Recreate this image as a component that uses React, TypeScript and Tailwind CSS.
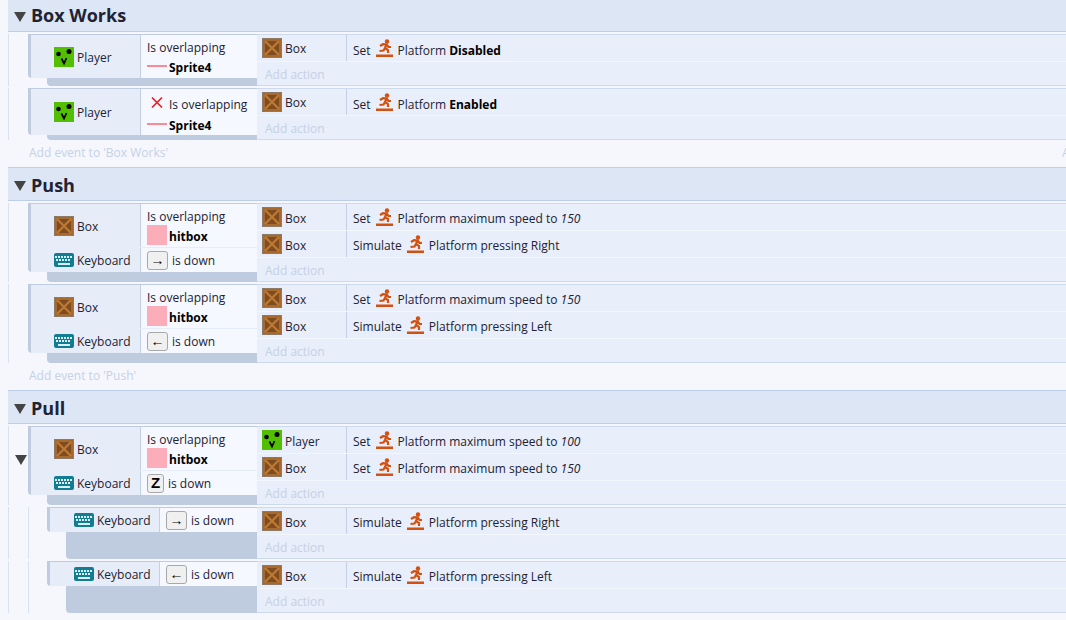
import { FC, ReactNode } from "react";

const PlayerIcon: FC = () => (
  <svg width="20" height="20" viewBox="0 0 20 20" className="shrink-0">
    <rect width="20" height="20" fill="#52bf02" />
    <circle cx="4.5" cy="7" r="2.3" fill="#000" />
    <circle cx="15" cy="4.5" r="2.5" fill="#000" />
    <path d="M7.5 11.5 L10 16.5 L12.5 11" stroke="#000" strokeWidth="1.8" fill="none" />
  </svg>
);

const BoxIcon: FC = () => (
  <svg width="20" height="20" viewBox="0 0 20 20" className="shrink-0">
    <rect width="20" height="20" fill="#a8692f" />
    <rect x="0.5" y="0.5" width="19" height="19" fill="none" stroke="#8c7a66" />
    <rect x="3" y="3" width="14" height="14" fill="#7f4c22" />
    <path d="M3 3 L17 17 M17 3 L3 17" stroke="#bd7831" strokeWidth="2.4" />
  </svg>
);

const KeyboardIcon: FC = () => (
  <svg width="20" height="14" viewBox="0 0 20 14" className="shrink-0">
    <rect width="20" height="14" rx="2" fill="#127c92" />
    {[2, 5, 8, 11, 14, 17].map((x) => (
      <rect key={x} x={x - 1} y="3" width="2" height="2" fill="#d8f0f4" />
    ))}
    {[3, 6, 9, 12, 15].map((x) => (
      <rect key={x} x={x - 1} y="6" width="2" height="2" fill="#d8f0f4" />
    ))}
    <rect x="4" y="10" width="12" height="2" fill="#d8f0f4" />
  </svg>
);

const PlatformIcon: FC = () => (
  <svg width="18" height="18" viewBox="0 0 18 18" className="shrink-0">
    <circle cx="11" cy="2.5" r="2.2" fill="#d4500f" />
    <path
      d="M4 7 L7 5.2 L10.5 5.5 L9 9 L12 11 L12 14 M9 9 L7.5 11.5 L3.5 12 M10.5 5.5 L12.5 8 L15 8"
      stroke="#d4500f"
      strokeWidth="2.2"
      fill="none"
    />
    <rect x="0" y="15.5" width="17" height="2.5" fill="#d4500f" />
  </svg>
);

const Key: FC<{ label: string; narrow?: boolean }> = ({ label, narrow }) => (
  <span
    className={
      narrow
        ? "flex h-[19px] w-[17px] items-center justify-center rounded-[3px] border border-[#a8a8a8] bg-[#f0f0f0] font-['Liberation_Sans',sans-serif] text-[15px] font-bold text-black"
        : "flex h-[19px] w-[21px] items-center justify-center rounded-[3px] border border-[#a8a8a8] bg-[#f0f0f0] font-['Liberation_Sans',sans-serif] text-[14px] text-black"
    }
  >
    {label}
  </span>
);

const ObjectCell: FC<{ icon: ReactNode; name: string; drop?: boolean }> = ({ icon, name, drop }) => (
  <div className="flex items-center gap-[3px]">
    {icon}
    <span className={drop ? "pt-[4px]" : "pt-[2px]"}>{name}</span>
  </div>
);

const Overlap: FC<{ inverted?: boolean; target: "Sprite4" | "hitbox" }> = ({
  inverted,
  target,
}) => (
  <div className="flex flex-col pl-[6px]">
    <div className={inverted ? "flex h-[23px] items-end" : "flex h-[18px] items-center"}>
      {inverted && (
        <svg width="16" height="16" viewBox="0 0 16 16" className="mt-[4px] mr-[4px] ml-[2px] shrink-0 self-start">
          <path d="M3 2.5 L13 12.5 M13 2.5 L3 12.5" stroke="#ee1c25" strokeWidth="1.7" />
        </svg>
      )}
      <span className="pt-[2px]">Is overlapping</span>
    </div>
    <div className="flex h-[20px] items-center gap-[2px]">
      {target === "hitbox" ? (
        <span className="h-[20px] w-[20px] bg-[#fbadb9]" />
      ) : (
        <span className="h-[2px] w-[20px] bg-[#fb8a94]" />
      )}
      <span className="pt-[5px] font-bold text-black">{target}</span>
    </div>
  </div>
);

const IsDown: FC<{ label: string; narrow?: boolean }> = ({ label, narrow }) => (
  <div className="flex items-center gap-[4px] pl-[6px]">
    <Key label={label} narrow={narrow} />
    <span className="pt-[2px]">is down</span>
  </div>
);

const Action: FC<{
  icon: ReactNode;
  name: string;
  verb: string;
  low?: boolean;
  children: ReactNode;
}> = ({ icon, name, verb, low, children }) => (
  <div className="flex h-[27px] items-center border-b border-[#f2f6fd]">
    <div className="w-[89px] pl-[5px]">
      <ObjectCell icon={icon} name={name} drop={!low} />
    </div>
    <div className="flex h-[26px] items-center gap-[3px] border-l border-[#c3d0e4] pl-[6px]">
      <span className={low ? "mt-[5px] mr-[2px]" : "mt-[4px] mr-[2px]"}>{verb}</span>
      <PlatformIcon />
      <span className={low ? "mt-[5px] ml-[1px]" : "mt-[4px] ml-[1px]"}>{children}</span>
    </div>
  </div>
);

type Cond = { object: ReactNode; body: ReactNode; height: number };

const Event: FC<{
  conds: Cond[];
  actions: ReactNode;
  sub?: boolean;
  fold?: boolean;
  tail: number;
}> = ({ conds, actions, sub, fold, tail }) => (
  <div className="ml-[8px] flex border-l border-[#d8e2f1]">
    <div className="flex w-[19px] shrink-0 items-center justify-center">
      {fold && <span className="mb-[11px] ml-[5px] h-0 w-0 border-x-[6px] border-t-[10px] border-x-transparent border-t-[#444]" />}
    </div>
    {sub && <div className="w-[19px] shrink-0 border-l border-[#d8e2f1]" />}
    <div className={sub ? "flex w-[210px] shrink-0 flex-col" : "flex w-[229px] shrink-0 flex-col"}>
      <div className="rounded-bl-[4px] border-t border-l-[3px] border-[#bfcbdf] bg-[#f5f8fe]">
        {conds.map((c, i) => (
          <div
            key={i}
            className={i > 0 ? "flex border-t border-[#e6edf9]" : "flex"}
            style={{ height: c.height }}
          >
            <div
              className={
                sub
                  ? "flex w-[110px] shrink-0 items-center border-r border-[#c3d0e4] bg-[#e6edf9] pl-[24px]"
                  : "flex w-[110px] shrink-0 items-center border-r border-[#c3d0e4] bg-[#e6edf9] pl-[23px]"
              }
            >
              {c.object}
            </div>
            <div className="flex flex-1 items-center">{c.body}</div>
          </div>
        ))}
      </div>
      <div className="ml-[19px] rounded-bl-[4px] bg-[#bfcbdf]" style={{ height: tail }} />
    </div>
    <div className="flex-1 border-t border-b border-[#cdd9ec] bg-[#e8eefa]">
      {actions}
      <div className="flex h-[23px] items-center pt-[2px] pl-[8px] text-[#c6d1e4]">Add action</div>
    </div>
  </div>
);

const Group: FC<{ title: string; first?: boolean; children: ReactNode }> = ({
  title,
  first,
  children,
}) => (
  <div>
    <div
      className={
        first
          ? "ml-[8px] flex h-[32px] items-center gap-[5px] border-b border-[#bccee8] bg-[#dce6f4] pl-[6px]"
          : "ml-[8px] flex h-[34px] items-center gap-[5px] border-y border-[#bccee8] bg-[#dce6f4] pt-[2px] pl-[6px]"
      }
    >
      <span className="mt-[2px] h-0 w-0 border-x-[6px] border-t-[10px] border-x-transparent border-t-[#444]" />
      <span className="text-[18px] font-bold text-[#222233]">{title}</span>
    </div>
    <div className="flex flex-col gap-[2px] pt-[2px]">{children}</div>
  </div>
);

const AddEvent: FC<{ group: string; more?: boolean }> = ({ group, more }) => (
  <div className="-mt-[2px] flex h-[27px] items-center justify-between pb-[2px] pl-[29px] text-[#c6d1e4]">
    <span>Add event to '{group}'</span>
    {more && <span className="w-[4px] overflow-hidden whitespace-nowrap">Add</span>}
  </div>
);

const overlapRows = (object: ReactNode, key: ReactNode): Cond[] => [
  { object, body: <Overlap target="hitbox" />, height: 43 },
  {
    object: <ObjectCell icon={<KeyboardIcon />} name="Keyboard" />,
    body: key,
    height: 25,
  },
];

const App: FC = () => {
  return (
    <div className="h-[620px] w-[1066px] overflow-hidden bg-[#f5f7fd] font-['Open_Sans',sans-serif] text-[12px] text-[#222233]">
      <Group title="Box Works" first>
        <Event
          tail={8}
          conds={[
            {
              object: <ObjectCell icon={<PlayerIcon />} name="Player" />,
              body: <Overlap target="Sprite4" />,
              height: 43,
            },
          ]}
          actions={
            <Action icon={<BoxIcon />} name="Box" verb="Set" low>
              Platform <b className="text-black">Disabled</b>
            </Action>
          }
        />
        <Event
          tail={5}
          conds={[
            {
              object: <ObjectCell icon={<PlayerIcon />} name="Player" />,
              body: <Overlap inverted target="Sprite4" />,
              height: 46,
            },
          ]}
          actions={
            <Action icon={<BoxIcon />} name="Box" verb="Set" low>
              Platform <b className="text-black">Enabled</b>
            </Action>
          }
        />
        <AddEvent group="Box Works" more />
      </Group>
      <Group title="Push">
        <Event
          tail={10}
          conds={overlapRows(<ObjectCell icon={<BoxIcon />} name="Box" />, <IsDown label="→" />)}
          actions={
            <>
              <Action icon={<BoxIcon />} name="Box" verb="Set">
                Platform maximum speed to <i>150</i>
              </Action>
              <Action icon={<BoxIcon />} name="Box" verb="Simulate">
                Platform pressing Right
              </Action>
            </>
          }
        />
        <Event
          tail={10}
          conds={overlapRows(<ObjectCell icon={<BoxIcon />} name="Box" />, <IsDown label="←" />)}
          actions={
            <>
              <Action icon={<BoxIcon />} name="Box" verb="Set">
                Platform maximum speed to <i>150</i>
              </Action>
              <Action icon={<BoxIcon />} name="Box" verb="Simulate">
                Platform pressing Left
              </Action>
            </>
          }
        />
        <AddEvent group="Push" />
      </Group>
      <Group title="Pull">
        <Event
          fold
          tail={10}
          conds={overlapRows(<ObjectCell icon={<BoxIcon />} name="Box" />, <IsDown label="Z" narrow />)}
          actions={
            <>
              <Action icon={<PlayerIcon />} name="Player" verb="Set">
                Platform maximum speed to <i>100</i>
              </Action>
              <Action icon={<BoxIcon />} name="Box" verb="Set">
                Platform maximum speed to <i>150</i>
              </Action>
            </>
          }
        />
        <Event
          sub
          tail={27}
          conds={[
            {
              object: <ObjectCell icon={<KeyboardIcon />} name="Keyboard" />,
              body: <IsDown label="→" />,
              height: 24,
            },
          ]}
          actions={
            <Action icon={<BoxIcon />} name="Box" verb="Simulate">
              Platform pressing Right
            </Action>
          }
        />
        <Event
          sub
          tail={27}
          conds={[
            {
              object: <ObjectCell icon={<KeyboardIcon />} name="Keyboard" />,
              body: <IsDown label="←" />,
              height: 24,
            },
          ]}
          actions={
            <Action icon={<BoxIcon />} name="Box" verb="Simulate">
              Platform pressing Left
            </Action>
          }
        />
      </Group>
    </div>
  );
};

export default App;
